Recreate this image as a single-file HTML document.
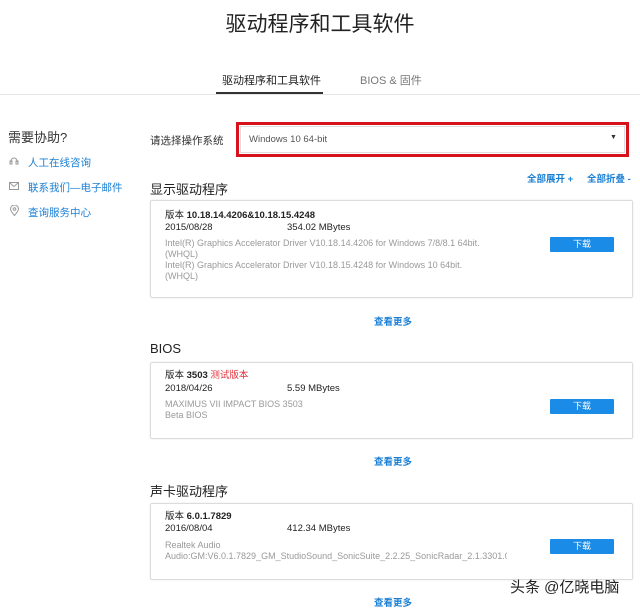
<!DOCTYPE html>
<html><head><meta charset="utf-8"><style>
*{margin:0;padding:0;box-sizing:border-box}
body{width:640px;height:607px;background:#fff;position:relative;overflow:hidden;font-family:"Liberation Sans","Noto Sans CJK SC",sans-serif;color:#222}
.a{position:absolute;white-space:nowrap}
.blue{color:#1a7fd4}
.card{position:absolute;left:150px;width:483px;border:1px solid #dcdcdc;border-radius:2px;box-shadow:0 0 2px rgba(0,0,0,.08)}
.btn{position:absolute;left:550px;width:64px;height:15px;background:#1a8be6;color:#fff;font-size:9px;text-align:center;line-height:15px;border-radius:1px}
.g{color:#999;font-size:9px;line-height:11px}
.v{font-size:9.5px;color:#222;line-height:12px}
.more{font-size:9.5px;color:#1a7fd4;font-weight:bold;left:374px}
.h{font-size:13px;color:#222}
</style></head><body>
<div class="a" style="left:0;width:640px;text-align:center;top:8px;font-size:21px;color:#222">驱动程序和工具软件</div>
<div class="a" style="left:222px;top:72px;font-size:11px;color:#222">驱动程序和工具软件</div>
<div class="a" style="left:360px;top:72px;font-size:11px;color:#777">BIOS &amp; 固件</div>
<div class="a" style="left:0;top:94px;width:640px;height:1px;background:#e6e6e6"></div>
<div class="a" style="left:216px;top:92px;width:107px;height:2px;background:#333"></div>

<div class="a" style="left:8px;top:127px;font-size:13px;color:#333">需要协助?</div>
<svg class="a" style="left:9px;top:156px" width="10" height="10" viewBox="0 0 10 10" fill="none" stroke="#999" stroke-width="1"><path d="M2 6V5a3 3 0 0 1 6 0v1"/><rect x="1" y="5" width="2" height="3"/><rect x="7" y="5" width="2" height="3"/></svg>
<div class="a blue" style="left:28px;top:155px;font-size:10.5px">人工在线咨询</div>
<svg class="a" style="left:9px;top:182px" width="10" height="8" viewBox="0 0 10 8" fill="none" stroke="#999" stroke-width="1"><rect x=".5" y=".5" width="9" height="7"/><path d="M.5 .5L5 4.5 9.5 .5"/></svg>
<div class="a blue" style="left:28px;top:180px;font-size:10.5px">联系我们—电子邮件</div>
<svg class="a" style="left:10px;top:205px" width="9" height="11" viewBox="0 0 9 11" fill="none" stroke="#999" stroke-width="1"><path d="M4.5 10.5C1.5 7 .5 5.5 .5 4a4 4 0 0 1 8 0c0 1.5-1 3-4 6.5z"/><circle cx="4.5" cy="4" r="1.3"/></svg>
<div class="a blue" style="left:28px;top:205px;font-size:10.5px">查询服务中心</div>

<div class="a" style="left:150px;top:133px;font-size:10.5px;color:#333">请选择操作系统</div>
<div class="a" style="left:236px;top:122px;width:393px;height:35px;border:3px solid #d8121c"></div>
<div class="a" style="left:240px;top:126px;width:385px;height:27px;border:1px solid #ddd;background:#fff"></div>
<div class="a" style="left:249px;top:134px;font-size:9.5px;color:#555">Windows 10 64-bit</div>
<div class="a" style="left:610px;top:134px;font-size:7px;color:#333">▼</div>

<div class="a blue" style="left:527px;top:171px;font-size:9.5px;font-weight:bold">全部展开 +</div>
<div class="a blue" style="left:587px;top:171px;font-size:9.5px;font-weight:bold">全部折叠 -</div>

<div class="a h" style="left:150px;top:179px">显示驱动程序</div>
<div class="card" style="top:200px;height:98px"></div>
<div class="a v" style="left:165px;top:210px">版本 <b>10.18.14.4206&amp;10.18.15.4248</b></div>
<div class="a v" style="left:165px;top:222px">2015/08/28</div>
<div class="a v" style="left:287px;top:222px">354.02 MBytes</div>
<div class="a g" style="left:165px;top:238px">Intel(R) Graphics Accelerator Driver V10.18.14.4206 for Windows 7/8/8.1 64bit.<br>(WHQL)<br>Intel(R) Graphics Accelerator Driver V10.18.15.4248 for Windows 10 64bit.<br>(WHQL)</div>
<div class="btn" style="top:237px">下载</div>
<div class="a more" style="top:314px">查看更多</div>

<div class="a h" style="left:150px;top:341px">BIOS</div>
<div class="card" style="top:362px;height:77px"></div>
<div class="a v" style="left:165px;top:370px">版本 <b>3503</b> <span style="color:#e0333a">测试版本</span></div>
<div class="a v" style="left:165px;top:383px">2018/04/26</div>
<div class="a v" style="left:287px;top:383px">5.59 MBytes</div>
<div class="a g" style="left:165px;top:399px">MAXIMUS VII IMPACT BIOS 3503<br>Beta BIOS</div>
<div class="btn" style="top:399px">下载</div>
<div class="a more" style="top:454px">查看更多</div>

<div class="a h" style="left:150px;top:481px">声卡驱动程序</div>
<div class="card" style="top:503px;height:77px"></div>
<div class="a v" style="left:165px;top:511px">版本 <b>6.0.1.7829</b></div>
<div class="a v" style="left:165px;top:523px">2016/08/04</div>
<div class="a v" style="left:287px;top:523px">412.34 MBytes</div>
<div class="a g" style="left:165px;top:540px;width:342px;overflow:hidden">Realtek Audio<br>Audio:GM:V6.0.1.7829_GM_StudioSound_SonicSuite_2.2.25_SonicRadar_2.1.3301.0</div>
<div class="btn" style="top:539px">下载</div>
<div class="a more" style="top:595px">查看更多</div>

<div class="a" style="left:510px;top:576px;font-size:15px;color:#222">头条 @亿晓电脑</div>
</body></html>
